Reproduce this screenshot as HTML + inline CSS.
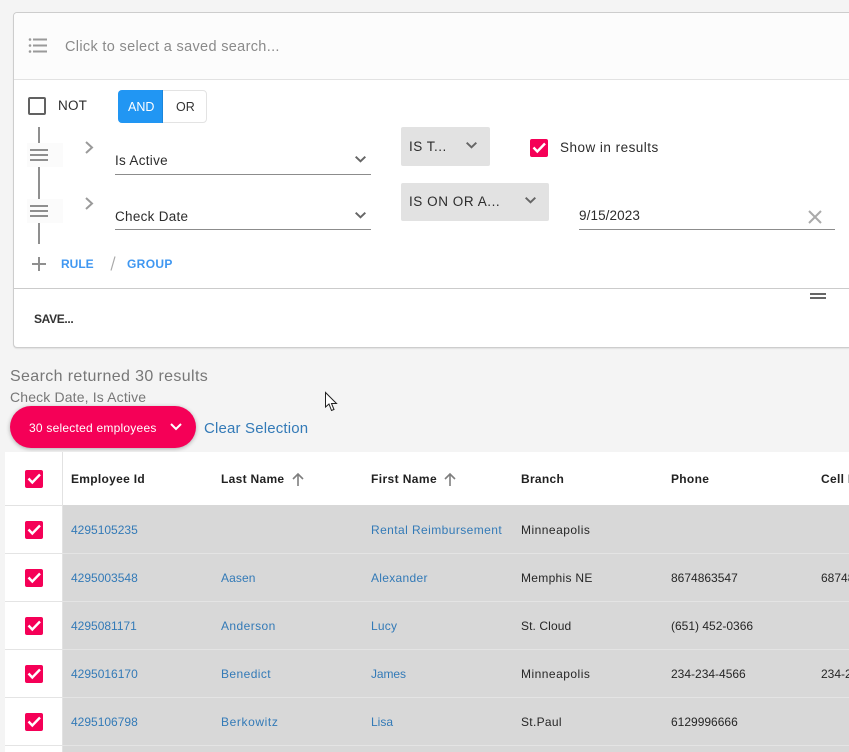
<!DOCTYPE html>
<html><head><meta charset="utf-8">
<style>
html,body{margin:0;padding:0;width:849px;height:752px;overflow:hidden;background:#f4f4f4;font-family:"Liberation Sans",sans-serif;color:#333}
.a{position:absolute}
.t{position:absolute;white-space:nowrap;line-height:20px;height:20px}
.s{font-size:12px;letter-spacing:.3px;color:#262626}
.l{font-size:12px;letter-spacing:.3px;color:#337ab7}
.d{letter-spacing:0}
.h{font-size:12px;font-weight:bold;letter-spacing:.3px;color:#222}
.n{font-size:13.5px;letter-spacing:.2px;color:#2c2c2c}
.cb{position:absolute;left:25px;width:18px;height:18px;background:#f50057;border-radius:2px}
svg{position:absolute;overflow:visible}
</style></head><body>

<!-- panel -->
<div class="a" style="left:13px;top:12px;width:835px;height:334px;background:#fff;border:1px solid #cdcdcd;border-right:0;border-radius:4px 0 0 4px;box-shadow:0 1px 1px rgba(0,0,0,.08)"></div>
<div class="a" style="left:14px;top:13px;width:835px;height:66px;background:#fcfcfc;border-bottom:1px solid #e2e2e2;border-radius:3px 0 0 0"></div>
<div class="a" style="left:14px;top:288px;width:835px;height:1px;background:#cbcbcb"></div>

<!-- list icon -->
<svg style="left:28px;top:38px" width="20" height="16" viewBox="0 0 20 16" fill="#9a9a9a" stroke="none">
<circle cx="2" cy="1.5" r="1.3"/><circle cx="2" cy="7.5" r="1.3"/><circle cx="2" cy="13.5" r="1.3"/>
<path d="M5 1.5H19M5 7.5H19M5 13.5H19" fill="none" stroke="#9a9a9a" stroke-width="2"/></svg>
<div class="t" style="left:65px;top:37px;font-size:14.5px;letter-spacing:.33px;color:#8a8a8a">Click to select a saved search...</div>

<!-- NOT -->
<div class="a" style="left:28px;top:97px;width:14px;height:14px;border:2px solid #616161;border-radius:2px"></div>
<div class="t n" style="left:58px;top:96px">NOT</div>

<!-- AND / OR -->
<div class="a" style="left:118px;top:90px;width:87px;height:31px;background:#fff;border:1px solid #e3e3e3;border-radius:4px"></div>
<div class="a" style="left:118px;top:90px;width:45px;height:33px;background:#2196f3;border-radius:4px 0 0 4px;box-shadow:inset -1px 0 0 #1b86dc"></div>
<div class="t" style="left:128px;top:97px;font-size:12.5px;color:#fff">AND</div>
<div class="t" style="left:176px;top:97px;font-size:12.5px;color:#333">OR</div>

<!-- tree lines -->
<div class="a" style="left:38px;top:127px;width:2px;height:16px;background:#8f8f8f"></div>
<div class="a" style="left:38px;top:167px;width:2px;height:32px;background:#8f8f8f"></div>
<div class="a" style="left:38px;top:223px;width:2px;height:21px;background:#8f8f8f"></div>

<div class="a" style="left:27px;top:143px;width:36px;height:24px;background:#fbfbfb"></div>
<div class="a" style="left:27px;top:199px;width:36px;height:24px;background:#fbfbfb"></div>
<svg style="left:30px;top:149px" width="18" height="12" fill="none" stroke="#8f8f8f" stroke-width="2"><path d="M0 1H18M0 6H18M0 11H18"/></svg>
<svg style="left:30px;top:205px" width="18" height="12" fill="none" stroke="#8f8f8f" stroke-width="2"><path d="M0 1H18M0 6H18M0 11H18"/></svg>

<!-- chevrons -->
<svg style="left:85px;top:141px" width="8" height="13" fill="none" stroke="#9a9a9a" stroke-width="2"><path d="M1 1L7 6.5L1 12"/></svg>
<svg style="left:85px;top:197px" width="8" height="13" fill="none" stroke="#9a9a9a" stroke-width="2"><path d="M1 1L7 6.5L1 12"/></svg>

<!-- field selects -->
<div class="t n" style="left:115px;top:151px;letter-spacing:.3px">Is Active</div>
<div class="a" style="left:115px;top:174px;width:256px;height:1px;background:#8c8c8c"></div>
<svg style="left:355px;top:156px" width="11" height="7" fill="none" stroke="#666" stroke-width="2"><path d="M.7 .7L5.5 5.3L10.3 .7"/></svg>
<div class="t n" style="left:115px;top:207px;letter-spacing:.28px">Check Date</div>
<div class="a" style="left:115px;top:229px;width:256px;height:1px;background:#8c8c8c"></div>
<svg style="left:355px;top:212px" width="11" height="7" fill="none" stroke="#666" stroke-width="2"><path d="M.7 .7L5.5 5.3L10.3 .7"/></svg>

<!-- operators -->
<div class="a" style="left:401px;top:127px;width:89px;height:39px;background:#e2e2e2;border-radius:2px"></div>
<div class="t n" style="left:409px;top:137px;letter-spacing:.5px">IS T...</div>
<svg style="left:466px;top:142px" width="11" height="7" fill="none" stroke="#666" stroke-width="2"><path d="M.7 .7L5.5 5.3L10.3 .7"/></svg>
<div class="a" style="left:401px;top:183px;width:148px;height:38px;background:#e2e2e2;border-radius:2px"></div>
<div class="t n" style="left:409px;top:192px;letter-spacing:.55px">IS ON OR A...</div>
<svg style="left:525px;top:197px" width="11" height="7" fill="none" stroke="#666" stroke-width="2"><path d="M.7 .7L5.5 5.3L10.3 .7"/></svg>

<!-- show in results -->
<div class="a" style="left:530px;top:139px;width:18px;height:18px;background:#f50057;border-radius:2px"></div>
<svg style="left:530px;top:139px" width="18" height="18" fill="none" stroke="#fff" stroke-width="2.4"><path d="M3.5 8.5L7.3 12.5L15 4.5"/></svg>
<div class="t n" style="left:560px;top:138px;letter-spacing:.48px">Show in results</div>

<!-- date -->
<div class="t n" style="left:579px;top:206px;font-size:13.5px;letter-spacing:.1px">9/15/2023</div>
<div class="a" style="left:579px;top:229px;width:256px;height:1px;background:#8c8c8c"></div>
<svg style="left:808px;top:210px" width="14" height="14" fill="none" stroke="#aaa" stroke-width="2"><path d="M1 1L13 13M13 1L1 13"/></svg>

<!-- add -->
<svg style="left:32px;top:257px" width="14" height="14" fill="none" stroke="#8f8f8f" stroke-width="2"><path d="M7 0V14M0 7H14"/></svg>
<div class="t" style="left:61px;top:254px;font-size:12px;font-weight:bold;letter-spacing:0;color:#3f97f1">RULE</div>
<svg style="left:110px;top:256px" width="6" height="15" fill="none" stroke="#a9a9a9" stroke-width="1.2"><path d="M5 0.5L1 14.5"/></svg>
<div class="t" style="left:127px;top:254px;font-size:12px;font-weight:bold;letter-spacing:.35px;color:#3f97f1">GROUP</div>

<div class="t" style="left:34px;top:309px;font-size:12px;font-weight:bold;letter-spacing:-.35px;color:#333">SAVE...</div>
<div class="a" style="left:810px;top:293px;width:16px;height:2px;background:#666"></div>
<div class="a" style="left:810px;top:297px;width:16px;height:2px;background:#666"></div>

<!-- results -->
<div class="t" style="left:10px;top:367px;font-size:16px;letter-spacing:.37px;color:#777">Search returned 30 results</div>
<div class="t" style="left:10px;top:387px;font-size:14px;letter-spacing:.15px;color:#777">Check Date, Is Active</div>

<!-- selection pill -->
<div class="a" style="left:10px;top:406px;width:186px;height:42px;background:#f50057;border-radius:21px;box-shadow:0 1px 4px rgba(0,0,0,.3)"></div>
<div class="t" style="left:29px;top:418px;font-size:12px;letter-spacing:.23px;color:#fff">30 selected employees</div>
<svg style="left:170px;top:423px" width="12" height="8" fill="none" stroke="#fff" stroke-width="2"><path d="M1 1L6 6L11 1"/></svg>
<div class="t" style="left:204px;top:419px;font-size:15px;letter-spacing:.17px;color:#337ab7">Clear Selection</div>

<!-- cursor -->
<svg style="left:325px;top:392px" width="13" height="20" fill="#fff" stroke="#222" stroke-width="1"><path d="M.5 .5V15L4 12L6.5 18.5L9 17.5L6.5 11.5H11.5Z"/></svg>

<!-- table -->
<div class="a" style="left:5px;top:452px;width:844px;height:300px;background:#fff"></div>
<div class="a" style="left:63px;top:505px;width:786px;height:247px;background:#d8d8d8"></div>
<div class="a" style="left:62px;top:452px;width:1px;height:300px;background:#e2e2e2"></div>
<div class="a" style="left:5px;top:505px;width:58px;height:1px;background:#e2e2e2"></div>
<div class="a" style="left:5px;top:553px;width:844px;height:1px;background:#e4e4e4"></div>
<div class="a" style="left:5px;top:601px;width:844px;height:1px;background:#e4e4e4"></div>
<div class="a" style="left:5px;top:649px;width:844px;height:1px;background:#e4e4e4"></div>
<div class="a" style="left:5px;top:697px;width:844px;height:1px;background:#e4e4e4"></div>
<div class="a" style="left:5px;top:745px;width:844px;height:1px;background:#e4e4e4"></div>

<!-- checkboxes -->
<div class="cb" style="top:470px"></div><svg style="left:25px;top:470px" width="18" height="18" fill="none" stroke="#fff" stroke-width="2.4"><path d="M3.5 8.5L7.3 12.5L15 4.5"/></svg>
<div class="cb" style="top:521px"></div><svg style="left:25px;top:521px" width="18" height="18" fill="none" stroke="#fff" stroke-width="2.4"><path d="M3.5 8.5L7.3 12.5L15 4.5"/></svg>
<div class="cb" style="top:569px"></div><svg style="left:25px;top:569px" width="18" height="18" fill="none" stroke="#fff" stroke-width="2.4"><path d="M3.5 8.5L7.3 12.5L15 4.5"/></svg>
<div class="cb" style="top:617px"></div><svg style="left:25px;top:617px" width="18" height="18" fill="none" stroke="#fff" stroke-width="2.4"><path d="M3.5 8.5L7.3 12.5L15 4.5"/></svg>
<div class="cb" style="top:665px"></div><svg style="left:25px;top:665px" width="18" height="18" fill="none" stroke="#fff" stroke-width="2.4"><path d="M3.5 8.5L7.3 12.5L15 4.5"/></svg>
<div class="cb" style="top:713px"></div><svg style="left:25px;top:713px" width="18" height="18" fill="none" stroke="#fff" stroke-width="2.4"><path d="M3.5 8.5L7.3 12.5L15 4.5"/></svg>

<!-- header -->
<div class="t h" style="left:71px;top:469px">Employee Id</div>
<div class="t h" style="left:221px;top:469px">Last Name</div>
<svg style="left:292px;top:473px" width="12" height="13" fill="none" stroke="#7e7e7e" stroke-width="1.6"><path d="M6 13V1M1 6L6 1L11 6"/></svg>
<div class="t h" style="left:371px;top:469px;letter-spacing:.4px">First Name</div>
<svg style="left:444px;top:473px" width="12" height="13" fill="none" stroke="#7e7e7e" stroke-width="1.6"><path d="M6 13V1M1 6L6 1L11 6"/></svg>
<div class="t h" style="left:521px;top:469px">Branch</div>
<div class="t h" style="left:671px;top:469px">Phone</div>
<div class="a" style="left:821px;top:469px;width:28px;height:20px;overflow:hidden"><div class="t h" style="left:0;top:0">Cell Phone</div></div>

<!-- rows -->
<div class="t l d" style="left:71px;top:520px">4295105235</div>
<div class="t l" style="left:371px;top:520px;letter-spacing:.42px">Rental Reimbursement</div>
<div class="t s" style="left:521px;top:520px;letter-spacing:.48px">Minneapolis</div>

<div class="t l d" style="left:71px;top:568px">4295003548</div>
<div class="t l" style="left:221px;top:568px;letter-spacing:.1px">Aasen</div>
<div class="t l" style="left:371px;top:568px;letter-spacing:.3px">Alexander</div>
<div class="t s" style="left:521px;top:568px;letter-spacing:.3px">Memphis NE</div>
<div class="t s d" style="left:671px;top:568px">8674863547</div>
<div class="a" style="left:821px;top:568px;width:28px;height:20px;overflow:hidden"><div class="t s d" style="left:0;top:0">6874863547</div></div>

<div class="t l d" style="left:71px;top:616px">4295081171</div>
<div class="t l" style="left:221px;top:616px;letter-spacing:.42px">Anderson</div>
<div class="t l" style="left:371px;top:616px;letter-spacing:.2px">Lucy</div>
<div class="t s" style="left:521px;top:616px;letter-spacing:.1px">St. Cloud</div>
<div class="t s d" style="left:671px;top:616px">(651) 452-0366</div>

<div class="t l d" style="left:71px;top:664px">4295016170</div>
<div class="t l" style="left:221px;top:664px;letter-spacing:.42px">Benedict</div>
<div class="t l" style="left:371px;top:664px;letter-spacing:-.1px">James</div>
<div class="t s" style="left:521px;top:664px;letter-spacing:.48px">Minneapolis</div>
<div class="t s d" style="left:671px;top:664px">234-234-4566</div>
<div class="a" style="left:821px;top:664px;width:28px;height:20px;overflow:hidden"><div class="t s d" style="left:0;top:0">234-234-4566</div></div>

<div class="t l d" style="left:71px;top:712px">4295106798</div>
<div class="t l" style="left:221px;top:712px;letter-spacing:.6px">Berkowitz</div>
<div class="t l" style="left:371px;top:712px;letter-spacing:0">Lisa</div>
<div class="t s" style="left:521px;top:712px;letter-spacing:.3px">St.Paul</div>
<div class="t s d" style="left:671px;top:712px">6129996666</div>

</body></html>
